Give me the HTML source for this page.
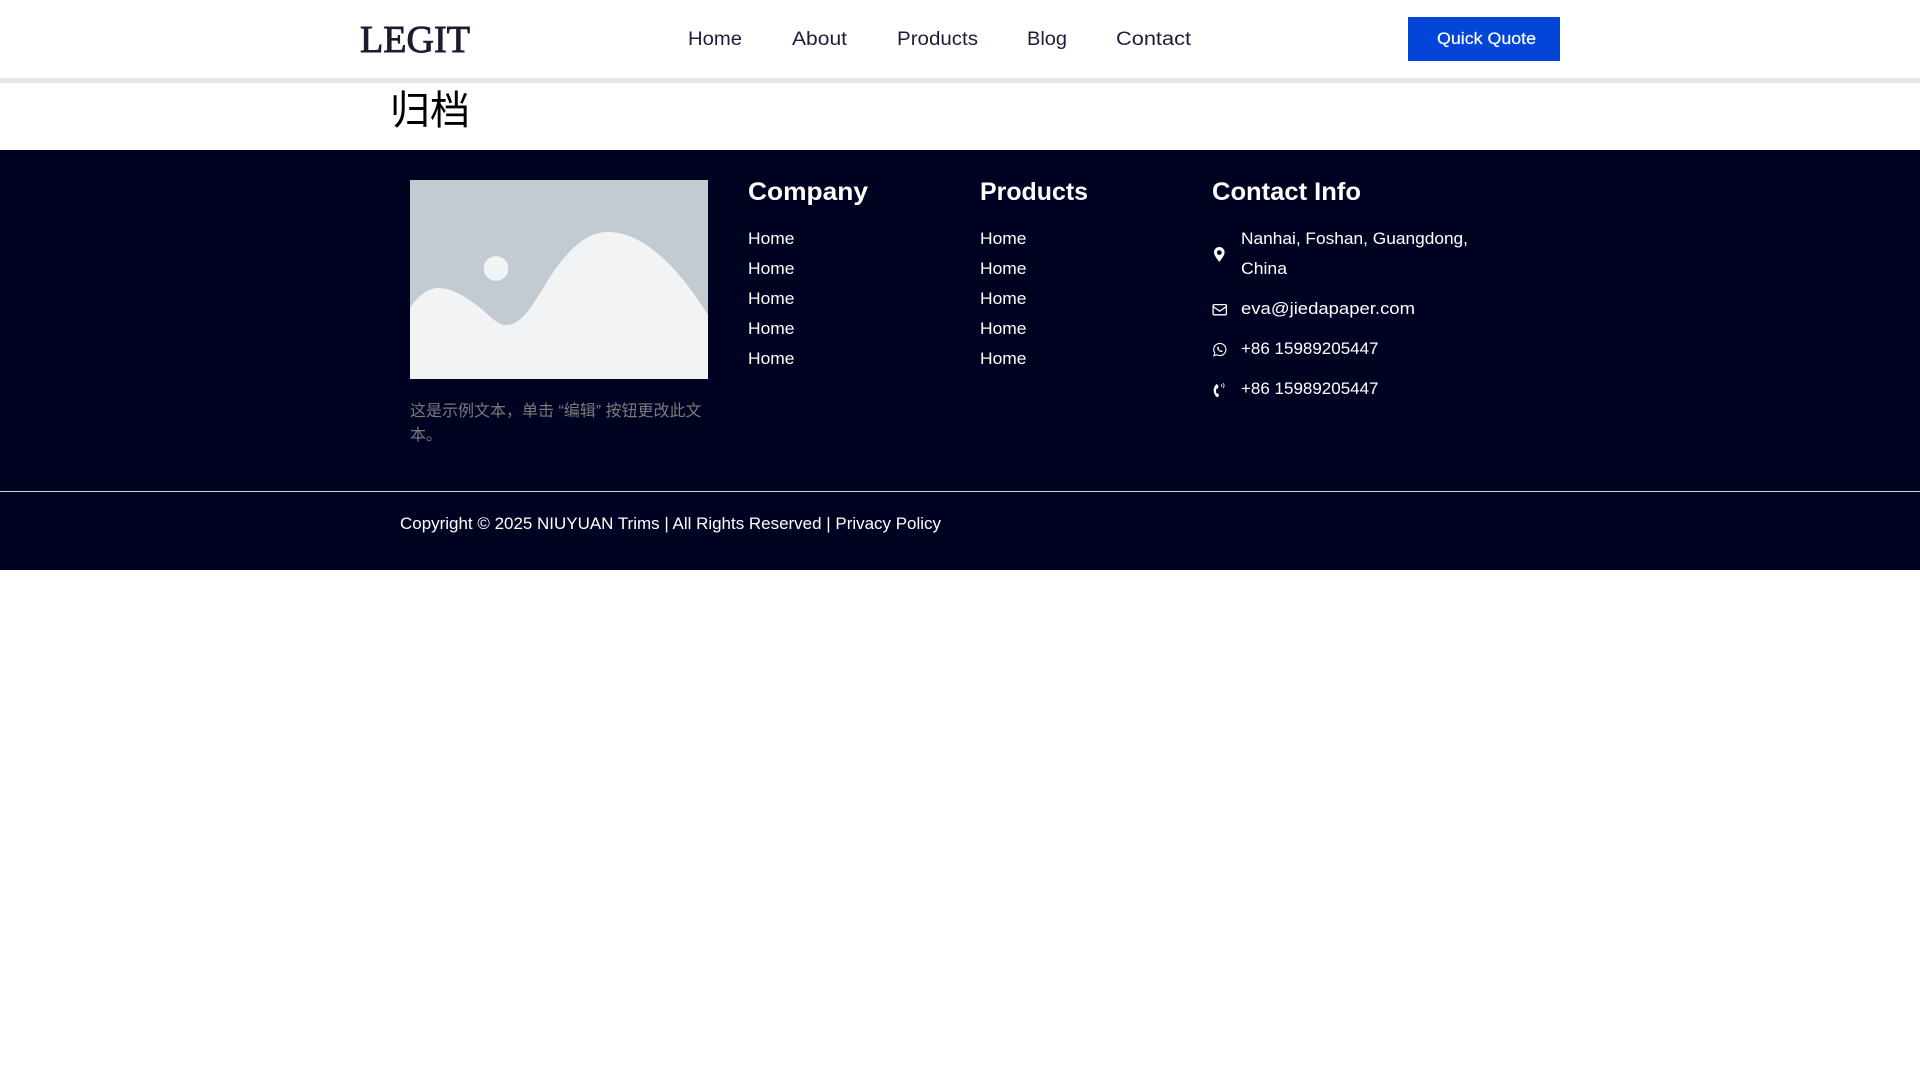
<!DOCTYPE html>
<html lang="zh">
<head>
<meta charset="utf-8">
<title>归档</title>
<style>
html,body{margin:0;padding:0;background:#fff;width:1920px;height:1080px;overflow:hidden}
svg{position:absolute;left:0;top:0;display:block}
text{font-family:"Liberation Sans","Noto Sans CJK SC",sans-serif}
.nav{font-size:19px;fill:#1d1d3b}
.h{font-size:25px;font-weight:700;fill:#fff}
.l{font-size:17px;fill:#fff}
.cjk{font-family:"Noto Sans CJK SC",sans-serif}
</style>
</head>
<body>
<svg width="1920" height="1080" viewBox="0 0 1920 1080" xmlns="http://www.w3.org/2000/svg">
  <!-- header -->
  <rect x="0" y="0" width="1920" height="1080" fill="#fff"/>
  <rect x="0" y="78" width="1920" height="5" fill="#e5e5e5"/>
  <text x="360" y="52" font-size="38" textLength="110" lengthAdjust="spacingAndGlyphs" fill="#1b1c30" stroke="#1b1c30" stroke-width=".9" style='font-family:"Liberation Serif",serif'>LEGIT</text>
  <text class="nav" x="688" y="45" textLength="54" lengthAdjust="spacingAndGlyphs">Home</text>
  <text class="nav" x="792" y="45" textLength="55" lengthAdjust="spacingAndGlyphs">About</text>
  <text class="nav" x="897" y="45" textLength="81" lengthAdjust="spacingAndGlyphs">Products</text>
  <text class="nav" x="1027" y="45" textLength="40" lengthAdjust="spacingAndGlyphs">Blog</text>
  <text class="nav" x="1116" y="45" textLength="75" lengthAdjust="spacingAndGlyphs">Contact</text>
  <rect x="1408" y="17" width="152" height="44" fill="#0445d9"/>
  <text x="1437" y="44" font-size="17" textLength="99" lengthAdjust="spacingAndGlyphs" fill="#fff" stroke="#fff" stroke-width=".2">Quick Quote</text>

  <!-- title -->
  <text class="cjk" x="390" y="124" font-size="40" fill="#000">归档</text>

  <!-- footer -->
  <rect x="0" y="150" width="1920" height="420" fill="#000222"/>
  <rect x="410" y="180" width="298" height="199" fill="#c2cad2"/>
  <circle cx="496" cy="268.5" r="12.4" fill="#f2f3f5"/>
  <path d="M410 308C418 296 428 288 438 288C458 288 478 306 493 319C498 323 502 325 506 325C520 325 530 310 545 285C565 252 585 232 608 232C645 232 680 270 708 315V379H410Z" fill="#f2f3f5"/>
  <text x="410" y="416" font-size="16" fill="#7a7a7a">这是示例文本，单击 “编辑” 按钮更改此文</text>
  <text class="cjk" x="410" y="440" font-size="16" fill="#7a7a7a">本。</text>

  <text class="h" x="748" y="200" textLength="120" lengthAdjust="spacingAndGlyphs">Company</text>
  <text class="l" x="748" y="244" textLength="46.5" lengthAdjust="spacingAndGlyphs">Home</text>
  <text class="l" x="748" y="274" textLength="46.5" lengthAdjust="spacingAndGlyphs">Home</text>
  <text class="l" x="748" y="304" textLength="46.5" lengthAdjust="spacingAndGlyphs">Home</text>
  <text class="l" x="748" y="334" textLength="46.5" lengthAdjust="spacingAndGlyphs">Home</text>
  <text class="l" x="748" y="364" textLength="46.5" lengthAdjust="spacingAndGlyphs">Home</text>

  <text class="h" x="980" y="200" textLength="108" lengthAdjust="spacingAndGlyphs">Products</text>
  <text class="l" x="980" y="244" textLength="46.5" lengthAdjust="spacingAndGlyphs">Home</text>
  <text class="l" x="980" y="274" textLength="46.5" lengthAdjust="spacingAndGlyphs">Home</text>
  <text class="l" x="980" y="304" textLength="46.5" lengthAdjust="spacingAndGlyphs">Home</text>
  <text class="l" x="980" y="334" textLength="46.5" lengthAdjust="spacingAndGlyphs">Home</text>
  <text class="l" x="980" y="364" textLength="46.5" lengthAdjust="spacingAndGlyphs">Home</text>

  <text class="h" x="1212" y="200" textLength="149" lengthAdjust="spacingAndGlyphs">Contact Info</text>
  <text class="l" x="1241" y="244" textLength="227" lengthAdjust="spacingAndGlyphs">Nanhai, Foshan, Guangdong,</text>
  <text class="l" x="1241" y="274" textLength="46" lengthAdjust="spacingAndGlyphs">China</text>
  <text class="l" x="1241" y="314" textLength="174" lengthAdjust="spacingAndGlyphs">eva@jiedapaper.com</text>
  <text class="l" x="1241" y="354" textLength="137.5" lengthAdjust="spacingAndGlyphs">+86 15989205447</text>
  <text class="l" x="1241" y="394" textLength="137.5" lengthAdjust="spacingAndGlyphs">+86 15989205447</text>

  <!-- pin -->
  <path fill-rule="evenodd" fill="#fff" d="M1219.3 247C1216.3 247 1214 249.4 1214 252.3C1214 255.6 1217.6 259.5 1219.3 262C1221 259.5 1224.6 255.6 1224.6 252.3C1224.6 249.4 1222.3 247 1219.3 247ZM1219.3 250.2A2.4 2.4 0 1 1 1219.3 255A2.4 2.4 0 1 1 1219.3 250.2Z"/>
  <!-- envelope -->
  <rect x="1213.1" y="304.6" width="13.3" height="10.2" rx="1.2" fill="none" stroke="#fff" stroke-width="1.3"/>
  <path d="M1213.3 306.6L1219.7 311.2L1226.2 306.6" fill="none" stroke="#fff" stroke-width="1.3"/>
  <!-- whatsapp -->
  <path d="M1219.8 343.4A6.1 6.1 0 0 1 1219.8 355.6C1218.7 355.6 1217.7 355.3 1216.8 354.8L1213.9 355.7L1214.8 353C1214.2 352 1213.7 350.8 1213.7 349.5A6.1 6.1 0 0 1 1219.8 343.4Z" fill="none" stroke="#fff" stroke-width="1.1"/>
  <path d="M1217.6 346.8C1217 347.4 1217 348.3 1217.5 349.3C1218.2 350.6 1219.5 351.7 1220.8 352C1221.7 352.2 1222.5 351.8 1222.8 351L1221.3 350.1L1220.6 350.7C1219.8 350.3 1219 349.5 1218.6 348.8L1219.1 348.1L1218.3 346.6Z" fill="#fff"/>
  <!-- phone -->
  <path d="M1216.7 384C1214.6 385.8 1213.4 388.5 1213.7 391.2C1214 393.6 1215.4 396 1217.3 397.4L1219.2 395.4L1217.6 393.1L1216.4 393.6C1215.9 391.9 1215.9 390 1216.5 388.4L1217.8 388.6L1218.6 385.8Z" fill="#fff"/>
  <path d="M1221.3 384.4C1222 385 1222 386.2 1221.4 386.9M1223.2 383.3C1224.4 384.5 1224.4 386.7 1223.2 387.9" fill="none" stroke="#fff" stroke-width=".9"/>

  <rect x="0" y="491" width="1920" height="1" fill="#d5d6db"/>
  <text class="l" x="400" y="529" textLength="541" lengthAdjust="spacingAndGlyphs">Copyright © 2025 NIUYUAN Trims | All Rights Reserved | Privacy Policy</text>
</svg>
</body>
</html>
